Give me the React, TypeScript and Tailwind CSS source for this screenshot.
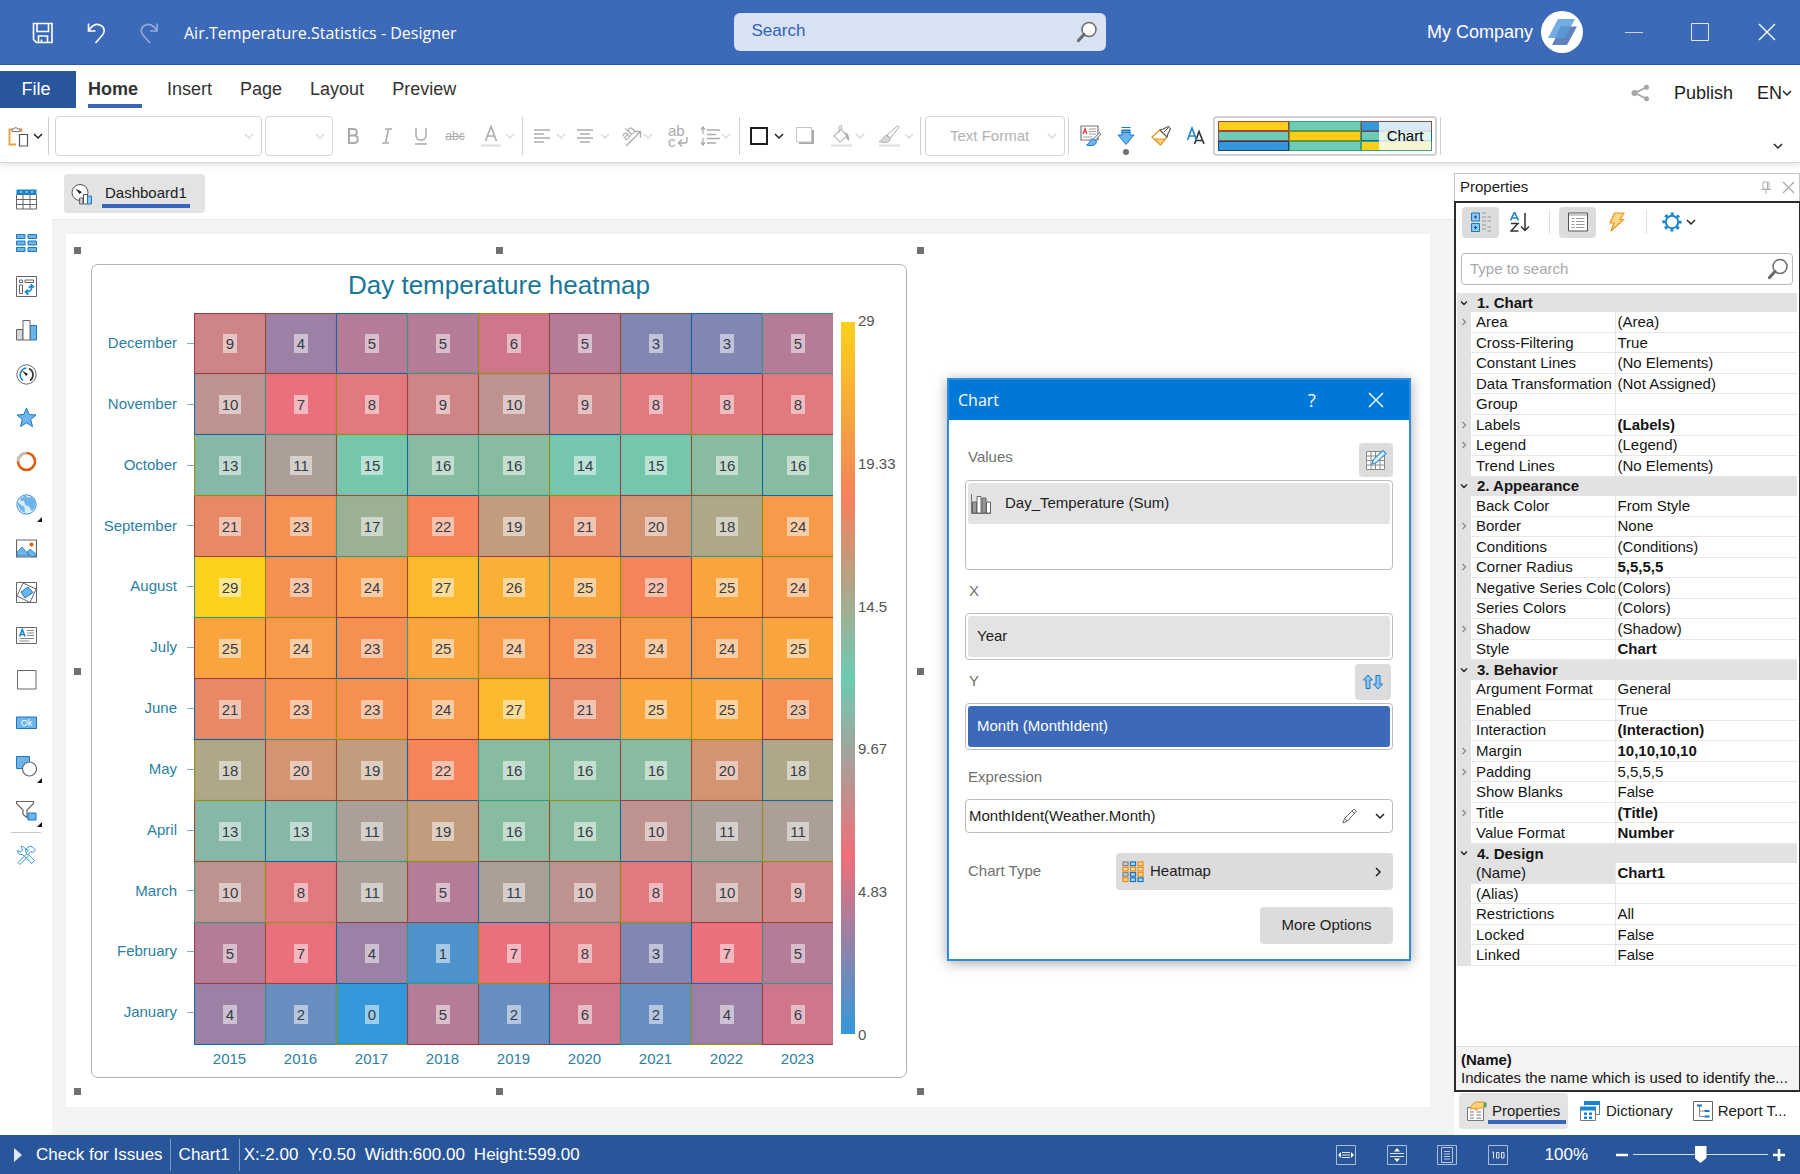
import React from "react";

type Kids = { children?: React.ReactNode };

/* ---------- small shared pieces ---------- */

function Svg({ w = 20, h = 20, className = "", children }: Kids & { w?: number; h?: number; className?: string }) {
  return (
    <svg width={w} height={h} viewBox={`0 0 ${w} ${h}`} fill="none" className={`shrink-0 ${className}`} aria-hidden="true">
      {children}
    </svg>
  );
}

function Chevron({ className = "text-[#222]" }: { className?: string }) {
  return (
    <Svg w={10} h={10} className={className}>
      <path d="M1 3l4 4 4-4" stroke="currentColor" strokeWidth="1.5" />
    </Svg>
  );
}

const faint = "text-[#dcdcdc]";

function Sep({ className = "" }: { className?: string }) {
  return <div className={`h-[38px] w-px shrink-0 bg-[#cfcfcf] ${className}`} />;
}

function Tool({ label, className = "", children }: Kids & { label: string; className?: string }) {
  return (
    <button type="button" aria-label={label} className={`flex h-8 shrink-0 items-center ${className}`}>
      {children}
    </button>
  );
}

function Magnifier({ fill = "none" }: { fill?: string }) {
  return (
    <Svg w={22} h={22}>
      <circle cx="13" cy="8.5" r="7" fill={fill} stroke="#6b6b6b" strokeWidth="1.5" />
      <path d="M8 13.500l-5.500 6" stroke="#6b6b6b" strokeWidth="3.200" strokeLinecap="round" />
    </Svg>
  );
}

/* ---------- title bar ---------- */

function TitleBar() {
  return (
    <header className="flex h-[65px] shrink-0 items-center border-b border-[#2a5ab0] bg-[#3d6ab8] text-white">
      <div className="flex flex-1 items-center pt-0.5">
        <Tool label="Save" className="ml-8">
          <Svg w={22} h={22}>
            <path d="M1.500 1.500h18.500v19H4.500l-3-3z" stroke="#fff" strokeWidth="1.600" />
            <path d="M5 1.500v8h11.500v-8M6.500 20.500v-6.500h9v6.500M9.500 20.500v-3" stroke="#fff" strokeWidth="1.600" />
          </Svg>
        </Tool>
        <Tool label="Undo" className="ml-8">
          <Svg w={22} h={22}>
            <path d="M2.500 1.500v7.500h7M2.500 9C6 3 10.500 1.500 14 3c5 2 5 7 2.500 10L9.500 21" stroke="#fff" strokeWidth="1.600" />
          </Svg>
        </Tool>
        <Tool label="Redo" className="ml-[30px] opacity-45">
          <Svg w={22} h={22}>
            <path d="M19 1.500v7.500h-7M19 9C15.500 3 11 1.500 7.500 3c-5 2-5 7-2.500 10l7 8" stroke="#fff" strokeWidth="1.600" />
          </Svg>
        </Tool>
        <h1 className="ml-6 font-['Open_Sans',sans-serif] text-base">Air.Temperature.Statistics - Designer</h1>
      </div>
      <label className="ml-[39px] flex h-[38px] w-[372px] items-center rounded-md bg-[#d9e2f2] pr-2 pl-[18px]">
        <input
          type="text"
          aria-label="Search"
          placeholder="Search"
          className="min-w-0 flex-1 bg-transparent pb-0.5 text-[17px] text-[#2f62b5] outline-none placeholder:text-[#2f62b5]"
        />
        <Magnifier fill="#fff" />
      </label>
      <div className="flex flex-1 items-center justify-end">
        <span className="text-[18px]">My Company</span>
        <span className="ml-2 flex size-[42px] items-center justify-center rounded-full bg-white">
          <Svg w={32} h={28}>
            <path d="M12 1h17L19 20H2z" fill="#74ade3" />
            <path d="M15 8.500h16L21 27H6z" fill="#6282bd" />
            <path d="M15 8.500h10L19 20H9z" fill="#5b97d2" />
          </Svg>
        </span>
        <Tool label="Minimize" className="ml-[42px]">
          <Svg w={18} h={18}>
            <path d="M0 9.500h18" stroke="#c8d6ee" />
          </Svg>
        </Tool>
        <Tool label="Maximize" className="ml-[48px]">
          <Svg w={18} h={18}>
            <path d="M.5.500h17v17H.5z" stroke="#e0e8f6" />
          </Svg>
        </Tool>
        <Tool label="Close" className="mr-[24px] ml-[49px]">
          <Svg w={18} h={18}>
            <path d="M1 1l16 16M17 1L1 17" stroke="#fff" strokeWidth="1.300" />
          </Svg>
        </Tool>
      </div>
    </header>
  );
}

/* ---------- ribbon ---------- */

function RibbonTabs() {
  return (
    <nav className="flex items-start pt-[6px] text-[18px] text-[#333]">
      <button type="button" className="h-[37px] w-[76px] bg-[#29569a] pr-1 text-white">
        File
      </button>
      <button type="button" className="ml-3 h-[37px] w-[54px] border-b-4 border-[#3767b8] pt-1 pr-1 font-bold">
        Home
      </button>
      <button type="button" className="ml-[25px] h-[37px]">Insert</button>
      <button type="button" className="ml-[28px] h-[37px]">Page</button>
      <button type="button" className="ml-[28px] h-[37px]">Layout</button>
      <button type="button" className="ml-[28px] h-[37px]">Preview</button>
      <div className="ml-auto flex items-center pt-[6px] pr-2 text-[#1d1d1d]">
        <Svg w={19} h={18}>
          <path d="M16 3L4 9l12 6" stroke="#a5a5a5" strokeWidth="1.800" />
          <circle cx="3.500" cy="9" r="3" fill="#a5a5a5" />
          <circle cx="15.500" cy="3.200" r="2.500" fill="#a5a5a5" />
          <circle cx="15.500" cy="14.800" r="2.500" fill="#a5a5a5" />
        </Svg>
        <button type="button" className="ml-6 h-8">Publish</button>
        <button type="button" className="ml-6 flex h-8 items-center">
          EN <Chevron />
        </button>
      </div>
    </nav>
  );
}

function Combo({ label, text = "", className = "" }: { label: string; text?: string; className?: string }) {
  return (
    <label className={`relative block h-10 shrink-0 ${className}`}>
      <select
        aria-label={label}
        disabled
        className="size-full appearance-none rounded border border-[#d6d6d6] bg-white pl-6 text-[15px] text-[#b3b3b3] opacity-100"
      >
        <option>{text}</option>
      </select>
      <span className="absolute top-[15px] right-2">
        <Chevron className={faint} />
      </span>
    </label>
  );
}

function Gallery() {
  const colors = [
    ["bg-[#fccf1c]", "bg-[#6ecbb4]", "bg-[#3498db]"],
    ["bg-[#6ecbb4]", "bg-[#fccf1c]", "bg-[#6ecbb4]"],
    ["bg-[#3498db]", "bg-[#6ecbb4]", "bg-[#fccf1c]"],
  ];
  const edges = [
    ["border-[#a0483a]", "border-[#35a07c]", "border-[#a0483a]"],
    ["border-[#a0483a]", "border-[#9a8a00]", "border-[#0e6aa8]"],
    ["border-[#1f3f7a]", "border-[#35a07c]", "border-[#35a07c]"],
  ];
  return (
    <button type="button" aria-label="Chart style" className="relative ml-[7px] h-10 w-[224px] shrink-0 rounded border-2 border-[#d0d0d0] p-[3px]">
      <div className="grid size-full grid-cols-3 grid-rows-3">
        {colors.map((row, r) => row.map((c, i) => <div key={`${r}-${i}`} className={`border ${c} ${edges[r][i]}`} />))}
      </div>
      <span className="absolute top-1 right-1 flex h-7 w-[52px] items-center justify-center bg-white/80 text-[15px] text-black">
        Chart
      </span>
    </button>
  );
}

const grayInk = "text-[#ababab]";

function RibbonTools() {
  return (
    <div className="flex h-10 items-center">
      <Tool label="Paste" className="ml-2 gap-[4px]">
        <Svg w={21} h={22}>
          <path d="M8 19.500H1.500v-15H4M11 4.500h2.500V7" stroke="#f0a030" strokeWidth="1.800" />
          <path d="M4 6.500h8V4H9.500a1.800 1.800 0 0 0-3.500 0H4z" fill="#fff" stroke="#777" />
          <path d="M11.500 9.500h8v11.500h-8z" fill="#fff" stroke="#555" strokeWidth="1.200" />
        </Svg>
        <Chevron />
      </Tool>
      <Sep className="ml-[5px]" />
      <Combo label="Font" className="ml-1.5 w-[207px]" />
      <Combo label="Font size" className="ml-[3px] w-[68px]" />
      <div className={`ml-[3px] flex ${grayInk}`}>
        <Tool label="Bold" className="w-[34px] justify-center">
          <Svg w={12} h={16}>
            <path d="M2 1h4c5 0 5 6.500 0 6.500H2zM2 7.500h5c5 0 5 7.500 0 7.500H2z" stroke="currentColor" strokeWidth="2" />
          </Svg>
        </Tool>
        <Tool label="Italic" className="w-[34px] justify-center">
          <Svg w={12} h={16}>
            <path d="M4 1h7M1 15h7M7.500 1l-3 14" stroke="currentColor" strokeWidth="1.600" />
          </Svg>
        </Tool>
        <Tool label="Underline" className="w-[34px] justify-center">
          <Svg w={14} h={18}>
            <path d="M2 1v7.500c0 6 10 6 10 0V1M1 17h12" stroke="currentColor" strokeWidth="1.500" />
          </Svg>
        </Tool>
        <Tool label="Strikethrough" className="w-[34px] justify-center text-[12px] line-through">
          abc
        </Tool>
        <Tool label="Font color" className="ml-[9px] gap-1">
          <Svg w={20} h={22}>
            <path d="M4.500 16L10 1.500 15.500 16M6.500 11h7" stroke="currentColor" strokeWidth="1.600" />
            <path d="M0 20.500h20" stroke="#e2e2e2" strokeWidth="2.500" />
          </Svg>
          <Chevron className={faint} />
        </Tool>
      </div>
      <Sep className="ml-[7px]" />
      <Tool label="Horizontal alignment" className={`ml-[11px] gap-1.5 ${grayInk}`}>
        <Svg w={16} h={16}>
          <path d="M0 2h16M0 6h10M0 10h16M0 14h10" stroke="currentColor" strokeWidth="1.600" />
        </Svg>
        <Chevron className={faint} />
      </Tool>
      <Tool label="Vertical alignment" className={`ml-[11px] gap-[7px] ${grayInk}`}>
        <Svg w={16} h={16}>
          <path d="M0 2h16M3 6h10M0 10h16M3 14h10" stroke="currentColor" strokeWidth="1.600" />
        </Svg>
        <Chevron className={faint} />
      </Tool>
      <Tool label="Text angle" className={`ml-[11px] gap-[2px] ${grayInk}`}>
        <Svg w={20} h={22} className="overflow-visible">
          <text x="5" y="16" fontSize="13" fill="currentColor" transform="rotate(-45 5 16)">ab</text>
          <path d="M5 21L19.500 6.500M13.500 6.500h6v6" stroke="currentColor" strokeWidth="1.400" />
        </Svg>
        <Chevron className={faint} />
      </Tool>
      <Tool label="Word wrap" className={`relative ml-[15px] w-5 ${grayInk}`}>
        <span className="flex flex-col text-left text-[15px]/[11px]">
          <span>ab</span>
          <span className="flex items-end gap-px">
            c
            <Svg w={11} h={11}>
              <path d="M10 1v4q0 2-2 2H2M5 3.500L1.500 7 5 10.500" stroke="currentColor" strokeWidth="1.400" />
            </Svg>
          </span>
        </span>
      </Tool>
      <Tool label="Line spacing" className={`ml-[12px] gap-px ${grayInk}`}>
        <Svg w={20} h={20}>
          <path d="M7 4h13M7 8.500h9M7 12.500h13M7 17h9" stroke="currentColor" strokeWidth="1.700" />
          <path d="M3 1v7M1 3.500L3 1l2 2.500M3 12v7M1 16.500L3 19l2-2.500" stroke="currentColor" strokeWidth="1.300" />
        </Svg>
        <Chevron className={faint} />
      </Tool>
      <Sep className="ml-2" />
      <Tool label="Borders" className="ml-[10px] gap-1.5">
        <Svg w={18} h={18}>
          <path d="M1 1h16v16H1z" stroke="#1e1e1e" strokeWidth="2" />
        </Svg>
        <Chevron />
      </Tool>
      <Tool label="Shadow" className="ml-[12px]">
        <Svg w={19} h={18}>
          <path d="M3 3h15v14H3z" fill="#ababab" />
          <path d="M.5.500h15v14.500H.5z" fill="#fff" stroke="#c4c4c4" />
        </Svg>
      </Tool>
      <Tool label="Background" className={`ml-4 gap-[2px] ${grayInk}`}>
        <Svg w={22} h={22}>
          <path d="M3 11l7-7 6 7-7 6zM8 8V3q0-2.500 2.500-2v5" stroke="#bdbdbd" strokeWidth="1.200" />
          <path d="M13 7q5 1 5 6v3l-3-3q1-3-2-6z" fill="currentColor" />
          <path d="M0 20.500h21" stroke="#e4e4e4" strokeWidth="2.500" />
        </Svg>
        <Chevron className={faint} />
      </Tool>
      <Tool label="Brush color" className={`ml-[13px] gap-1 ${grayInk}`}>
        <Svg w={22} h={22}>
          <path d="M9 10L19.500.800l1.500 1.400L12.500 13z" fill="#fff" stroke="currentColor" />
          <path d="M8.500 10.500l4 3.500c-1 4-7 4-11.500 2.500 4-.500 4-6 7.500-6z" fill="#d8d8d8" stroke="currentColor" />
          <path d="M1 20.500h21" stroke="#e4e4e4" strokeWidth="2.500" />
        </Svg>
        <Chevron className={faint} />
      </Tool>
      <Sep className="ml-[6px]" />
      <Combo label="Text format" text="Text Format" className="ml-1 w-[140px]" />
      <Sep className="ml-[3px]" />
      <Tool label="Conditions" className="ml-[11px]">
        <Svg w={22} h={22}>
          <path d="M1 1h17v14H1z" fill="#fff" stroke="#777" strokeWidth="1.200" />
          <path d="M3 9l2-5.500L7 9M3.500 7h3" stroke="#e03c3c" strokeWidth="1.200" />
          <path d="M9 4h7M9 6.500h7M9 9h7M3 12h9" stroke="#999" />
          <path d="M20.500 8L15 14" stroke="#777" strokeWidth="3" />
          <path d="M20 8.500L15 14" stroke="#fff" strokeWidth="1.200" />
          <path d="M13 13.500l3.500 3c-.5 5-6.500 4.500-10 3.500 3.500-1 3-6 6.500-6.500z" fill="#6db4ea" stroke="#1a79c2" />
        </Svg>
      </Tool>
      <Tool label="Insert down" className="relative ml-[15px]">
        <Svg w={18} h={20}>
          <path d="M5 4.500V9H1l8 9.500L17 9h-4V4.500z" fill="#6db4ea" stroke="#1a79c2" />
          <path d="M4.500 1.500h9M4.500 4h9M4.500 6.500h9" stroke="#1a79c2" />
        </Svg>
        <span className="absolute -bottom-[3px] left-[6px] size-[6px] rounded-full bg-[#6f6f6f]" />
      </Tool>
      <Tool label="Format painter" className="ml-4">
        <Svg w={20} h={20}>
          <path d="M1 11l8-7 7 7-6.500 8z" fill="#fff" stroke="#e79329" strokeWidth="1.300" />
          <path d="M4 13h10l-4.500 6z" fill="#ffd27a" stroke="#e79329" />
          <path d="M9 4l3-1 5.500-2.500L19.500 3 17 7.500l-1 3.500z" fill="#fff" stroke="#555" strokeWidth="1.100" />
          <path d="M13 6l4-4" stroke="#555" />
        </Svg>
      </Tool>
      <Tool label="Styles" className="ml-[15px]">
        <Svg w={20} h={20}>
          <path d="M8.500 18L13 5.500 18 18M10 14.500h6.500" stroke="#333" strokeWidth="1.600" />
          <path d="M1.500 14L6 2l4.500 12M3 10h6" stroke="#1a86cf" strokeWidth="1.600" />
        </Svg>
      </Tool>
      <Gallery />
      <Sep className="ml-[3px]" />
      <button type="button" aria-label="Collapse ribbon" className="mt-5 mr-[17px] ml-auto">
        <Chevron />
      </button>
    </div>
  );
}

/* ---------- left toolbox ---------- */

const B = "#1a79c2";
const L = "#6db4ea";
const G = "#666";

const toolbox: { label: string; more?: boolean; icon: React.ReactNode }[] = [
  {
    label: "Table",
    icon: (
      <>
        <path d="M.5 5.500h20v14.500H.5zM.5 10.500h20M.5 15.500h20M7 5v15M14 5v15" stroke={G} />
        <path d="M.5.500h20v5H.5z" fill="#1a86cf" />
        <path d="M4 3h2M9.500 3h2M15 3h2" stroke="#fff" />
      </>
    ),
  },
  {
    label: "Cards",
    icon: (
      <g fill={L} stroke={B}>
        {[1.500, 8, 14.500].map((y) => (
          <React.Fragment key={y}>
            <path d={`M.5 ${y}h8.500v4h-8.500z`} />
            <path d={`M12 ${y}h8.500v4h-8.500z`} />
          </React.Fragment>
        ))}
      </g>
    ),
  },
  {
    label: "Pivot table",
    icon: (
      <>
        <path d="M.5.500h20v20H.5zM3.500 4h3v2.500h-3zM9 4h8.500v2.500H9zM3.500 9h3v8.500h-3z" stroke={G} />
        <path d="M15.500 9.500c1 4-1 6.500-5.500 6.500M13 12l2.500-3 2.500 2.500M12 13.500L9.500 16l3 2.500" stroke="#1a86cf" strokeWidth="1.700" />
      </>
    ),
  },
  {
    label: "Chart",
    icon: (
      <>
        <path d="M.5 9.500h6.500v10.500H.5z" fill="#d6d6d6" stroke={G} />
        <path d="M14 5.500h6.500V20H14z" fill={L} stroke={B} />
        <path d="M7 .5h7V20H7z" fill="#fff" stroke={G} />
      </>
    ),
  },
  {
    label: "Gauge",
    icon: (
      <>
        <circle cx="10.500" cy="10.500" r="9.700" stroke={G} />
        <path d="M7 16.500A7 7 0 0 1 10.500 4" stroke="#1a86cf" strokeWidth="1.700" />
        <path d="M13 4.500A7 7 0 0 1 14 16.500" stroke="#333" strokeWidth="1.700" />
        <path d="M6 6.500l6 3.500-2 2z" fill="#222" />
      </>
    ),
  },
  {
    label: "Indicator",
    icon: <path d="M10.500 1l2.700 6.500 6.800.500-5.300 4.500 1.800 7-6-3.700-6 3.700 1.800-7L1 8l6.800-.5z" fill={L} stroke={B} />,
  },
  {
    label: "Progress",
    icon: (
      <>
        <circle cx="10.500" cy="10.500" r="8.500" stroke="#d95f0e" strokeWidth="2.600" />
        <path d="M2 10.500A8.500 8.500 0 0 1 10.500 2" stroke="#c4c4c4" strokeWidth="2.600" />
      </>
    ),
  },
  {
    label: "Map",
    more: true,
    icon: (
      <>
        <circle cx="10.500" cy="10.500" r="9.700" fill="#d9ecfb" stroke={B} strokeWidth=".8" />
        <path d="M4.500 4.500l5-3 2 2 5-.5 3 5-1 6-3 3-2-4-4-2-1.500-4-4-.5zM1.500 8l3.500 3 3.500 2 .5 6-4.500-3q-3-4-3-8z" fill={L} />
      </>
    ),
  },
  {
    label: "Image",
    icon: (
      <>
        <path d="M.5 2h20v17H.5z" stroke={G} strokeWidth="1.200" />
        <path d="M1 18v-4l5-5 8 9zM11 14l3-3 6 5v2.500h-5z" fill={L} stroke={B} strokeWidth=".8" />
        <circle cx="15.500" cy="6.500" r="2" fill="#d95f0e" />
      </>
    ),
  },
  {
    label: "Region",
    icon: (
      <>
        <path d="M.5.500h20v20H.5zM7 1l13 6-6 13.500L1 14z" stroke={G} />
        <path d="M5 10l7-5 5 5.500-8 5.500z" fill={L} stroke={B} />
      </>
    ),
  },
  {
    label: "Text",
    icon: (
      <>
        <path d="M.5 2.500h20v16H.5z" stroke={G} />
        <path d="M3.500 11.500L6.300 4.500l2.700 7M4.500 9.500h3.500" stroke="#1a86cf" strokeWidth="1.600" />
        <path d="M11 5.500h7M11 8h7M11 10.500h7M3.500 13.500h14.500M3.500 16h10" stroke="#888" />
      </>
    ),
  },
  { label: "Panel", icon: <path d="M1.500 1.500h18.500v18.500H1.500z" stroke={G} /> },
  {
    label: "Button",
    icon: (
      <>
        <path d="M.5 5h20v11.500H.5z" fill={L} stroke={B} />
        <text x="10.500" y="14" fontSize="9" fill="#fff" textAnchor="middle">Ok</text>
      </>
    ),
  },
  {
    label: "Shape",
    more: true,
    icon: (
      <>
        <path d="M.5.500h13v12H.5z" fill={L} stroke={B} />
        <circle cx="13.500" cy="13" r="7" fill="#fff" stroke={G} strokeWidth="1.200" />
      </>
    ),
  },
  {
    label: "Filter",
    more: true,
    icon: (
      <>
        <path d="M.5 1.500h17v2L11 10v7.500l-4-3V10L.5 3.500z" stroke={G} strokeWidth="1.200" />
        <path d="M12 13h8v7h-8z" fill={L} stroke={B} />
      </>
    ),
  },
];

function Toolbox() {
  return (
    <aside className="flex w-[52px] shrink-0 flex-col items-center pt-[15px]">
      <div className="grid h-[654px] w-full auto-rows-fr">
        {toolbox.map((t) => (
          <button key={t.label} type="button" aria-label={t.label} className="relative flex items-center justify-center">
            <Svg w={21} h={21}>{t.icon}</Svg>
            {t.more && (
              <Svg w={5} h={5} className="absolute right-[10px] bottom-[5px]">
                <path d="M5 0v5H0z" fill="#111" />
              </Svg>
            )}
          </button>
        ))}
      </div>
      <div className="h-px w-[30px] bg-[#c9c9c9]" />
      <button type="button" aria-label="Setup toolbox" className="mt-3">
        <Svg w={20} h={20}>
          <path d="M2 17.500l9-9 2 2-9 9zM1.500 5.500l3 1.500 2-2L5 1.500c4-.5 5 3 4.500 5l9 9-2.500 3-9.500-9c-3 .5-5-1-5-4z" fill="#fff" stroke="#3796dc" />
          <path d="M9.500 4.500q4-4.500 7-2.500l3 3-2.500 2.500-2-1-3.500 3.500-1.500-2 2.500-3z" fill="#fff" stroke="#3796dc" />
        </Svg>
      </button>
    </aside>
  );
}

/* ---------- heatmap ---------- */

const years = [2015, 2016, 2017, 2018, 2019, 2020, 2021, 2022, 2023];
const months: [string, number[]][] = [
  ["December", [9, 4, 5, 5, 6, 5, 3, 3, 5]],
  ["November", [10, 7, 8, 9, 10, 9, 8, 8, 8]],
  ["October", [13, 11, 15, 16, 16, 14, 15, 16, 16]],
  ["September", [21, 23, 17, 22, 19, 21, 20, 18, 24]],
  ["August", [29, 23, 24, 27, 26, 25, 22, 25, 24]],
  ["July", [25, 24, 23, 25, 24, 23, 24, 24, 25]],
  ["June", [21, 23, 23, 24, 27, 21, 25, 25, 23]],
  ["May", [18, 20, 19, 22, 16, 16, 16, 20, 18]],
  ["April", [13, 13, 11, 19, 16, 16, 10, 11, 11]],
  ["March", [10, 8, 11, 5, 11, 10, 8, 10, 9]],
  ["February", [5, 7, 4, 1, 7, 8, 3, 7, 5]],
  ["January", [4, 2, 0, 5, 2, 6, 2, 4, 6]],
];

const stops = [
  [52, 152, 219],
  [239, 111, 121],
  [108, 203, 179],
  [245, 129, 93],
  [253, 208, 27],
];

function heat(value: number) {
  const p = (value / 29) * 4;
  const i = Math.min(3, Math.floor(p));
  const mix = stops[i].map((c, k) => Math.round(c + (stops[i + 1][k] - c) * (p - i)));
  return `rgb(${mix.join(",")})`;
}

const edgeCycle = ["border-[#0f68a5]", "border-[#359a80]", "border-[#979300]", "border-[#9b3c48]", "border-[#9c4a2c]"];

function Heatmap() {
  return (
    <section className="flex h-full w-full flex-col rounded-[7px] border border-[#b2b2b2] bg-white">
      <h2 className="h-[48px] pt-[2px] text-center text-[26px]/9 text-[#1a7699]">Day temperature heatmap</h2>
      <div className="flex min-h-0 flex-1">
        <div className="flex flex-col">
          <div className="flex flex-1">
            <div className="grid w-[102px] auto-rows-fr pb-0.5 text-[15px] text-[#2b7fa0]">
              {months.map(([name]) => (
                <div key={name} className="flex items-center justify-end gap-[10px]">
                  {name}
                  <span className="h-px w-[7px] bg-[#7fb0c2]" />
                </div>
              ))}
            </div>
            <div className="grid w-[639px] auto-rows-fr grid-cols-9">
              {months.map(([name, values], r) =>
                values.map((v, c) => (
                  <div
                    key={`${name}-${years[c]}`}
                    className={`flex items-center justify-center border-b border-l shadow-[inset_0_0_1px_rgba(0,0,0,0.25)] ${edgeCycle[(3 + 2 * r + c) % 5]} ${r === 0 ? "border-t" : ""}`}
                    style={{ backgroundColor: heat(v) }}
                  >
                    <span className="bg-white/50 px-[3px] text-[15px]/[19px] text-[#343c46]">{v}</span>
                  </div>
                )),
              )}
            </div>
          </div>
          <div className="ml-[102px] grid h-8 grid-cols-9 pt-[5px] text-center text-[15px]/[18px] text-[#2b7fa0]">
            {years.map((y) => (
              <span key={y}>{y}</span>
            ))}
          </div>
        </div>
        <div className="ml-2 flex gap-[3px] pt-[9px] pb-[43px]">
          <div className="w-[14px] bg-[linear-gradient(#fdd01b,#f5815d_25%,#6ccbb3_50%,#ef6f79_75%,#3498db)]" />
          <div className="-my-[10px] flex flex-col justify-between text-[15px]/[18px] text-[#555]">
            {["29", "19.33", "14.5", "9.67", "4.83", "0"].map((t) => (
              <span key={t}>{t}</span>
            ))}
          </div>
        </div>
      </div>
    </section>
  );
}

const handles = [
  "-top-[3px] -left-[3px]",
  "-top-[3px] left-1/2 -ml-[3px]",
  "-top-[3px] -right-[3px]",
  "top-1/2 -left-[3px] -mt-[3px]",
  "top-1/2 -right-[3px] -mt-[3px]",
  "-bottom-[3px] -left-[3px]",
  "-bottom-[3px] left-1/2 -ml-[3px]",
  "-right-[3px] -bottom-[3px]",
];

/* ---------- chart editor dialog ---------- */

function Dialog() {
  const caption = "text-[15px] text-[#707070]";
  const box = "rounded border border-[#bdbdbd] p-0.5";
  return (
    <div
      role="dialog"
      aria-label="Chart"
      className="absolute top-36 left-[881px] w-[464px] border-2 border-[#2d8ddd] bg-white text-[15px] text-[#1c1c1c] shadow-[0_2px_12px_rgba(0,0,0,0.35)]"
    >
      <div className="flex h-10 items-center bg-[#0078d7] px-[9px] text-white">
        <span className="flex-1 font-['Open_Sans',sans-serif] text-base">Chart</span>
        <button type="button" aria-label="Help" className="mr-[48px] w-4 font-['Open_Sans',sans-serif] text-[18px]">?</button>
        <button type="button" aria-label="Close dialog" className="mr-4">
          <Svg w={16} h={16}>
            <path d="M1 1l14 14M15 1L1 15" stroke="#fff" strokeWidth="1.400" />
          </Svg>
        </button>
      </div>
      <div className="flex flex-col pt-[22px] pr-4 pb-[15px] pl-4">
        <div className="mb-[3px] flex h-[35px] items-center justify-between">
          <span className={`pb-[5px] pl-[3px] ${caption}`}>Values</span>
          <button type="button" aria-label="Edit data" className="flex h-[34px] w-[34px] items-center justify-center rounded bg-[#dcdcdc]">
            <Svg w={22} h={22}>
              <path d="M1.500 2.500h18v18h-18zM1.500 7h18M1.500 11.500h18M1.500 16h18M6 2.500v18M10.500 2.500v18M15 2.500v18" fill="#fff" stroke="#888" />
              <path d="M7 15l1.500-4.500L18 1.500l3 3L11.500 13.500z" fill="#e7f3fd" stroke="#3796dc" strokeWidth="1.200" />
            </Svg>
          </button>
        </div>
        <div className={`h-[90px] ${box}`}>
          <button type="button" className="flex h-[41px] w-full items-center rounded-[3px] bg-[#e3e3e3] pl-[3px] text-left">
            <Svg w={20} h={20}>
              <path d="M.5 0v19.500H20" stroke="#777" />
              <path d="M1.500 8h4v11h-4zM11 4h4v15h-4z" fill="#999" stroke="#666" />
              <path d="M6 2.500h4v16.500H6zM15.500 8h4v11h-4z" fill="#fff" stroke="#666" />
            </Svg>
            <span className="ml-[14px]">Day_Temperature (Sum)</span>
          </button>
        </div>
        <span className={`flex h-[43px] items-center pl-1 ${caption}`}>X</span>
        <div className={box}>
          <button type="button" className="h-[41px] w-full rounded-[3px] bg-[#e3e3e3] pl-[9px] text-left">Year</button>
        </div>
        <div className="flex h-[43px] items-center justify-between pr-0.5">
          <span className={`pl-1 ${caption}`}>Y</span>
          <button type="button" aria-label="Sort" className="flex h-9 w-9 items-center justify-center rounded bg-[#dcdcdc]">
            <Svg w={20} h={16}>
              <path d="M5 1l4.500 5H7v8.500H3V6H.5z" fill="#8cc5f0" stroke={B} />
              <path d="M15 15l-4.500-5H13V1.500h4V10h2.500z" fill="#8cc5f0" stroke={B} />
            </Svg>
          </button>
        </div>
        <div className={box}>
          <button type="button" className="h-[41px] w-full rounded-[3px] bg-[#3d69b8] pl-[9px] text-left text-white">
            Month (MonthIdent)
          </button>
        </div>
        <label htmlFor="expression" className={`flex h-[49px] items-center pt-[5px] pl-[3px] ${caption}`}>Expression</label>
        <div className="flex h-[34px] items-center rounded border border-[#bdbdbd] pr-[7px] pl-[3px]">
          <input id="expression" type="text" defaultValue="MonthIdent(Weather.Month)" className="min-w-0 flex-1 bg-transparent outline-none" />
          <button type="button" aria-label="Edit expression" className="mr-[17px]">
            <Svg w={16} h={16}>
              <path d="M1 15l1.500-4.500L11.500 1.500q1.500-.5 3 1.500L5.500 13zM10 3l3 3M2.500 10.500l3 2.500" stroke="#666" />
            </Svg>
          </button>
          <button type="button" aria-label="Open expression list">
            <Chevron />
          </button>
        </div>
        <div className="mt-5 flex items-center justify-between">
          <span className={`pl-[3px] ${caption}`}>Chart Type</span>
          <button type="button" className="flex h-[37px] w-[277px] items-center rounded bg-[#dcdcdc] pr-[10px] pl-[6px]">
            <Svg w={22} h={22}>
              {[0, 1, 2].map((c) =>
                [0, 1, 2, 3].map((r) => {
                  const k = [["g", "o", "g", "o"], ["b", "o", "b", "b"], ["o", "o", "o", "b"]][c][r];
                  const [f, s] = k === "g" ? ["#cfcfcf", "#888"] : k === "b" ? ["#b7dcf7", B] : ["#ffe2a8", "#ee8f1c"];
                  return <rect key={`${c}${r}`} x={1 + c * 7.500} y={1 + r * 5.300} width="5" height="3.600" fill={f} stroke={s} strokeWidth="1.300" />;
                }),
              )}
            </Svg>
            <span className="ml-[6px] flex-1 text-left">Heatmap</span>
            <Svg w={10} h={10}>
              <path d="M3 1l4 4-4 4" stroke="#222" strokeWidth="1.500" />
            </Svg>
          </button>
        </div>
        <button type="button" className="mt-[17px] h-[37px] w-[133px] self-end rounded bg-[#dcdcdc]">More Options</button>
      </div>
    </div>
  );
}

/* ---------- properties panel ---------- */

type Row = [name: string, value: string, flags?: string];

/* flags: "e" = expandable, "b" = bold value, "s" = selected */
const groups: [string, Row[]][] = [
  ["1. Chart", [
    ["Area", "(Area)", "e"],
    ["Cross-Filtering", "True"],
    ["Constant Lines", "(No Elements)"],
    ["Data Transformation", "(Not Assigned)"],
    ["Group", ""],
    ["Labels", "(Labels)", "eb"],
    ["Legend", "(Legend)", "e"],
    ["Trend Lines", "(No Elements)"],
  ]],
  ["2. Appearance", [
    ["Back Color", "From Style"],
    ["Border", "None", "e"],
    ["Conditions", "(Conditions)"],
    ["Corner Radius", "5,5,5,5", "eb"],
    ["Negative Series Colors", "(Colors)"],
    ["Series Colors", "(Colors)"],
    ["Shadow", "(Shadow)", "e"],
    ["Style", "Chart", "b"],
  ]],
  ["3. Behavior", [
    ["Argument Format", "General"],
    ["Enabled", "True"],
    ["Interaction", "(Interaction)", "b"],
    ["Margin", "10,10,10,10", "eb"],
    ["Padding", "5,5,5,5", "e"],
    ["Show Blanks", "False"],
    ["Title", "(Title)", "eb"],
    ["Value Format", "Number", "b"],
  ]],
  ["4. Design", [
    ["(Name)", "Chart1", "bs"],
    ["(Alias)", ""],
    ["Restrictions", "All"],
    ["Locked", "False"],
    ["Linked", "False"],
  ]],
];

function PropertyTable() {
  return (
    <table className="h-[673px] w-[340px] table-fixed border-collapse bg-white text-[15px]/[18px] text-[#151515]">
      <colgroup>
        <col className="w-[14px]" />
        <col className="w-[144px]" />
        <col />
      </colgroup>
      {groups.map(([title, rows]) => (
        <tbody key={title}>
          <tr className="bg-[#e2e2e2]">
            <td className="p-0">
              <Svg w={8} h={8} className="ml-[3px]">
                <path d="M1 2.500l3 3 3-3" stroke="#222" strokeWidth="1.400" />
              </Svg>
            </td>
            <th colSpan={2} scope="rowgroup" className="p-0 pl-[6px] text-left font-bold">{title}</th>
          </tr>
          {rows.map(([name, value, flags = ""]) => (
            <tr key={name}>
              <td className="bg-[#e2e2e2] p-0">
                {flags.includes("e") && (
                  <Svg w={8} h={8} className="ml-[3px]">
                    <path d="M2.500 1l3 3-3 3" stroke="#888" strokeWidth="1.200" />
                  </Svg>
                )}
              </td>
              <th
                scope="row"
                className={`border-r border-b border-[#e6e6e6] p-0 pl-[5px] text-left font-normal ${flags.includes("s") ? "bg-[#e2e2e2]" : ""}`}
              >
                <div className="overflow-hidden whitespace-nowrap">{name}</div>
              </th>
              <td className={`border-b border-[#e6e6e6] p-0 pl-0.5 whitespace-nowrap ${flags.includes("b") ? "font-bold" : ""}`}>{value}</td>
            </tr>
          ))}
        </tbody>
      ))}
    </table>
  );
}

function PanelTool({ label, active = false, className = "", children }: Kids & { label: string; active?: boolean; className?: string }) {
  return (
    <button
      type="button"
      aria-label={label}
      className={`flex h-[31px] items-center justify-center rounded ${active ? "w-[37px] bg-[#dcdcdc]" : ""} ${className}`}
    >
      {children}
    </button>
  );
}

function PropertiesPanel() {
  return (
    <aside className="flex w-[346px] shrink-0 flex-col pt-[10px]">
      <div className="flex h-7 items-center border border-b-0 border-[#c4c4c4] pr-1 pl-[5px] text-[15px] text-[#1c1c1c]">
        <span className="flex-1">Properties</span>
        <Svg w={10} h={14}>
          <path d="M2 1h6v7H2zM6.500 1v7M0 8.500h10M5 8.500V13" stroke="#b0b0b0" />
        </Svg>
        <Svg w={13} h={13} className="ml-[11px]">
          <path d="M1 1l11 11M12 1L1 12" stroke="#a8a8a8" strokeWidth="1.200" />
        </Svg>
      </div>
      <div className="flex min-h-0 flex-1 flex-col border-2 border-r border-[#2b2b2b] bg-white">
        <div className="flex h-[38px] items-center pl-[6px]">
          <PanelTool label="Categorized" active>
            <Svg w={20} h={20}>
              <path d="M.5 1h8v8h-8zM.5 11.500h8v8h-8z" fill="#8cc5f0" stroke={B} />
              <path d="M4.500 3.500v3M3 5h3M4.500 14v3M3 15.500h3" stroke="#0d4f8b" />
              <path d="M11 1h4M11 5h4M11 9h4M11 13h4M11 17h4M16.500 5h3.500M16.500 9h3.500M16.500 15h3.500M16.500 19h3.500" stroke="#999" />
            </Svg>
          </PanelTool>
          <PanelTool label="Alphabetical" className="ml-[11px]">
            <Svg w={20} h={20}>
              <path d="M.5 8.500L4.500 0l4 8.500M2 6h5" stroke="#1a86cf" strokeWidth="1.600" />
              <path d="M1 11.500h7L1 19h7.500" stroke="#333" strokeWidth="1.500" />
              <path d="M15 1v17.500M11 14.500l4 4 4-4" stroke="#333" strokeWidth="1.500" />
            </Svg>
          </PanelTool>
          <div className="ml-[19px] h-6 w-px bg-[#dedede]" />
          <PanelTool label="Property list" active className="ml-[9px]">
            <Svg w={20} h={20}>
              <path d="M.5 1h19v18H.5z" fill="#fff" stroke="#555" />
              <path d="M1 3h18" stroke="#999" />
              <path d="M3.500 6.500h3M3.500 9.500h3M3.500 12.500h3M3.500 15.500h3M8 6.500h8.500M8 9.500h8.500M8 12.500h8.500M8 15.500h8.500" stroke="#999" />
            </Svg>
          </PanelTool>
          <PanelTool label="Events" className="ml-[13px]">
            <Svg w={16} h={20}>
              <path d="M5.500 1H15L11 7.500h3.500L2 19l3-8H1z" fill="#ffd98a" stroke="#ee8f1c" strokeWidth="1.200" />
            </Svg>
          </PanelTool>
          <div className="ml-[21px] h-6 w-px bg-[#dedede]" />
          <PanelTool label="Settings" className="ml-[15px] gap-1">
            <Svg w={20} h={20}>
              <circle cx="10" cy="10" r="6.200" stroke="#1a86cf" strokeWidth="2" />
              <circle cx="10" cy="10" r="8.200" stroke="#1a86cf" strokeWidth="2.800" strokeDasharray="3 3.440" strokeDashoffset="1.500" />
            </Svg>
            <Chevron />
          </PanelTool>
        </div>
        <label className="mt-[12px] mr-[6px] ml-[5px] flex h-8 items-center rounded border border-[#b8b8b8] pr-[3px] pl-2">
          <input
            type="text"
            aria-label="Type to search"
            placeholder="Type to search"
            className="min-w-0 flex-1 bg-transparent text-[15px] outline-none placeholder:text-[#a8a8a8]"
          />
          <Magnifier />
        </label>
        <div className="mt-2 flex-1 pl-px">
          <PropertyTable />
        </div>
        <div className="h-[44px] border-t border-[#dcdcdc] bg-[#f3f3f3] pt-1 pl-[5px] text-[15px]/[18px] text-[#151515]">
          <div className="font-bold">(Name)</div>
          <div className="truncate pr-2">Indicates the name which is used to identify the...</div>
        </div>
      </div>
      <div className="flex h-[43px] items-start pt-px pl-[5px] text-[15px] text-[#1c1c1c]">
        <button type="button" className="relative flex h-9 w-[109px] items-center rounded bg-[#e3e3e3] pl-[7px]">
          <Svg w={22} h={20}>
            <path d="M1.500 6.500h16v13h-16z" fill="#fff" stroke="#777" />
            <path d="M4 11h4M4 14h4M4 17h4M10.500 11h4.500M10.500 14h4.500M10.500 17h4.500" stroke="#777" />
            <path d="M4 8q2-6 6-7h8v6h-4L9.500 9.500Q9 7.500 11 7z" fill="#ffd27a" stroke="#e79329" />
            <path d="M18 1.500h2.500v5H18z" fill="#3fa568" />
          </Svg>
          <span className="ml-1">Properties</span>
          <span className="absolute right-0.5 bottom-[5px] h-1 w-[78px] bg-[#3767b8]" />
        </button>
        <button type="button" className="ml-[12px] flex h-9 items-center">
          <Svg w={20} h={20}>
            <path d="M4.500 4.500V.5h15v13H16" stroke="#777" />
            <path d="M4 0h16v4H4z" fill="#1a86cf" />
            <path d="M.5 6.500h15v13H.5z" fill="#fff" stroke="#777" />
            <path d="M0 5.500h16v4H0z" fill="#1a86cf" />
            <path d="M4 11.500h3v2.500H4zM9 11.500h3v2.500H9zM4 15.500h3V18H4zM9 15.500h3V18H9z" fill="#1a86cf" />
          </Svg>
          <span className="ml-[6px]">Dictionary</span>
        </button>
        <button type="button" className="ml-[20px] flex h-9 items-center whitespace-nowrap">
          <Svg w={20} h={20}>
            <path d="M.5.500h19v19H.5z" fill="#fff" stroke="#666" />
            <path d="M6.500 5v10.500h5M6.500 10h5" stroke="#888" />
            <path d="M4 4.500h5M11.500 10h5M11.500 15.500h5" stroke="#1a79c2" strokeWidth="2" />
          </Svg>
          <span className="ml-[5px]">Report T...</span>
        </button>
      </div>
    </aside>
  );
}

/* ---------- status bar ---------- */

function ViewIcon({ label, className, children }: Kids & { label: string; className: string }) {
  return (
    <button type="button" aria-label={label} className={className}>
      <Svg w={20} h={20}>
        <path d="M.5.500h19v19H.5z" stroke="#a9bcdb" />
        {children}
      </Svg>
    </button>
  );
}

function StatusBar() {
  return (
    <footer className="flex h-[39px] shrink-0 items-center bg-[#29569a] text-[17px] text-white">
      <Svg w={8} h={14} className="ml-[14px]">
        <path d="M0 0l8 7-8 7z" fill="#dfe6f2" />
      </Svg>
      <button type="button" className="ml-[14px]">Check for Issues</button>
      <div className="ml-[7px] h-8 w-px bg-[#7f9ac4]" />
      <span className="ml-2">Chart1</span>
      <div className="ml-[9px] h-8 w-px bg-[#7f9ac4]" />
      <div className="ml-1 flex gap-[9px]">
        <span>X:-2.00</span>
        <span>Y:0.50</span>
        <span>Width:600.00</span>
        <span>Height:599.00</span>
      </div>
      <ViewIcon label="Fit width" className="ml-auto">
        <path d="M6 7.500h8M6 10h8M6 12.500h8" stroke="#dfe6f2" />
        <path d="M5 7v6l-3-3zM15 7v6l3-3z" fill="#fff" />
      </ViewIcon>
      <ViewIcon label="Fit height" className="ml-[31px]">
        <path d="M3 8.500h14M3 11.500h14" stroke="#dfe6f2" />
        <path d="M7 6.500h6L10 3zM7 13.500h6L10 17z" fill="#fff" />
      </ViewIcon>
      <ViewIcon label="One page" className="ml-[30px]">
        <path d="M4.500 2.500h11v15h-11zM7 6.500h6M7 9h6M7 11.500h6M7 14h6" stroke="#b9c8e2" />
      </ViewIcon>
      <ViewIcon label="Actual size" className="ml-[31px]">
        <path d="M4 7h1.500v6.500M8.500 7.500h2.500v5.500H8.500zM13.500 7.500H16v5.500h-2.500z" stroke="#dfe6f2" />
      </ViewIcon>
      <span className="ml-[37px]">100%</span>
      <button type="button" aria-label="Zoom out" className="ml-[28px]">
        <Svg w={12} h={12}>
          <path d="M0 6h12" stroke="#fff" strokeWidth="2.500" />
        </Svg>
      </button>
      <input
        type="range"
        aria-label="Zoom"
        defaultValue={50}
        className="ml-[5px] h-5 w-[135px] appearance-none bg-transparent bg-[linear-gradient(#d5deed,#d5deed)] bg-[length:100%_1px] bg-center bg-no-repeat [&::-webkit-slider-thumb]:h-[17px] [&::-webkit-slider-thumb]:w-3 [&::-webkit-slider-thumb]:appearance-none [&::-webkit-slider-thumb]:bg-white [&::-webkit-slider-thumb]:[clip-path:polygon(0_0,100%_0,100%_70%,50%_100%,0_70%)]"
      />
      <button type="button" aria-label="Zoom in" className="mr-[15px] ml-[5px]">
        <Svg w={12} h={12}>
          <path d="M0 6h12M6 0v12" stroke="#fff" strokeWidth="2.500" />
        </Svg>
      </button>
    </footer>
  );
}

export default function App() {
  return (
    <div className="flex min-h-screen flex-col bg-white font-['Liberation_Sans',Arial,sans-serif]">
      <TitleBar />
      <div className="relative h-[98px] shrink-0 border-b border-[#d8d6d4] bg-white shadow-[0_2px_6px_rgba(0,0,0,0.12)]">
        <RibbonTabs />
        <div className="mt-[7px]">
          <RibbonTools />
        </div>
      </div>
      <main className="flex flex-1">
        <Toolbox />
        <div className="flex min-w-0 flex-1 flex-col">
          <div className="flex h-[57px] items-start border-b border-[#e6e6e6] pt-[11px] pl-3">
            <button type="button" className="relative flex h-[39px] w-[141px] items-center rounded bg-[#e3e3e3] pl-[7px] text-[15px] text-[#1c1c1c]">
              <Svg w={22} h={22}>
                <circle cx="9" cy="9.500" r="8" fill="#fff" stroke="#555" />
                <path d="M4.500 5.500l6.500 3.500-2.500 2z" fill="#222" />
                <path d="M8.500 15h3.500v6H8.500z" fill="#ccc" stroke="#666" />
                <path d="M12.500 11.500h4V21h-4z" fill="#fff" stroke="#555" />
                <path d="M16.500 13h4v8h-4z" fill="#8cc5f0" stroke={B} />
              </Svg>
              <span className="ml-3">Dashboard1</span>
              <span className="absolute bottom-[5px] left-[38px] h-1 w-[88px] bg-[#3767b8]" />
            </button>
          </div>
          <div className="flex flex-1 bg-[#f3f3f3] pt-[14px] pr-6 pb-[28px] pl-[14px]">
            <div className="relative flex min-w-0 flex-1 bg-white pt-4 pb-[15px] pl-[11px]">
              <div className="relative w-[844px] p-[14px]">
                <Heatmap />
                {handles.map((h) => (
                  <span key={h} className={`absolute size-[7px] bg-[#707070] ${h}`} />
                ))}
              </div>
              <Dialog />
            </div>
          </div>
        </div>
        <PropertiesPanel />
      </main>
      <StatusBar />
    </div>
  );
}
